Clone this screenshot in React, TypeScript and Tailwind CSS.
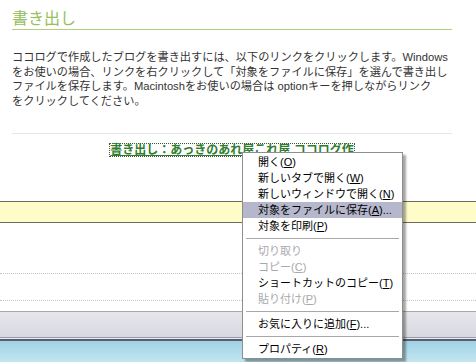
import React from 'react';

type MenuEntry =
  | { sep: true }
  | { sep?: false; label: string; key: string; tail?: string; disabled?: boolean; active?: boolean };

const menu: MenuEntry[] = [
  { label: '開く', key: 'O' },
  { label: '新しいタブで開く', key: 'W' },
  { label: '新しいウィンドウで開く', key: 'N' },
  { label: '対象をファイルに保存', key: 'A', tail: '...', active: true },
  { label: '対象を印刷', key: 'P' },
  { sep: true },
  { label: '切り取り', key: '', disabled: true },
  { label: 'コピー', key: 'C', disabled: true },
  { label: 'ショートカットのコピー', key: 'T' },
  { label: '貼り付け', key: 'P', disabled: true },
  { sep: true },
  { label: 'お気に入りに追加', key: 'F', tail: '...' },
  { sep: true },
  { label: 'プロパティ', key: 'R' },
];

const jp = "font-['Liberation_Sans','Noto_Sans_CJK_JP',sans-serif]";

function ContextMenu() {
  return (
    <div className={`absolute left-[242px] top-[152px] w-[161px] border border-[#8e8e8e] bg-white py-px shadow-[3px_3px_2px_rgba(0,0,0,0.35)] ${jp} text-[11px]`}>
      {menu.map((m, i) =>
        m.sep ? (
          <div key={i} className="my-[4px] mx-[3px] h-px bg-[#a8a8a8]" />
        ) : (
          <div
            key={i}
            className={`flex h-[16px] items-center pl-[15px] leading-none whitespace-nowrap ${
              m.active ? 'bg-[#b6b7cc]' : ''
            } ${m.disabled ? 'text-[#a9a8ac]' : 'text-black'}`}
          >
            {m.label}
            {m.key && (
              <>
                (<span className="underline">{m.key}</span>)
              </>
            )}
            {m.tail}
          </div>
        )
      )}
    </div>
  );
}

export default function App() {
  return (
    <div className={`relative flex h-[362px] w-[476px] flex-col overflow-hidden bg-white ${jp}`}>
      {/* Article */}
      <div className="pl-[12px] pr-[24px]">
        <h2 className="mt-[10px] h-[20px] border-b border-[#b3ce80] text-[16px] leading-[18px] font-normal text-[#95c05a]">
          書き出し
        </h2>

        <p className="mt-[20px] text-[11.2px] leading-[14.5px] text-[#333] whitespace-nowrap">
          ココログで作成したブログを書き出すには、以下のリンクをクリックします。Windows
          <br />
          をお使いの場合、リンクを右クリックして「対象をファイルに保存」を選んで書き出し
          <br />
          ファイルを保存します。Macintoshをお使いの場合は optionキーを押しながらリンク
          <br />
          をクリックしてください。
        </p>

        <div className="mt-[25px] h-px bg-[#e6e6e6]" />

        <div className="mt-[9px] flex justify-center">
          <a className="border border-dotted border-[#3a5a3a] text-[12px] leading-[12px] font-bold text-[#2f7d2f] underline whitespace-nowrap">
            書き出し：あっきのあれ屋これ屋 ココログ作
          </a>
        </div>
      </div>

      {/* Yellow band */}
      <div className="mt-[44px] h-[22px] border-y border-[#6c6c5c] bg-[#fefdc9]" />

      <div className="mt-[50px] border-t border-dotted border-[#c4c4c4]" />
      <div className="mt-[26px] border-t border-dotted border-[#c4c4c4]" />

      {/* Window chrome at the bottom */}
      <div className="mt-[10px] h-px bg-[#a9a9ad]" />
      <div className="h-[25px] bg-gradient-to-b from-[#e6e6ec] to-[#d8d8e0]" />
      <div className="h-px bg-[#9c9ca6]" />
      <div className="h-px bg-[#e8e8ee]" />
      <div className="h-[2px] bg-[#5c5c70]" />
      <div className="flex-1 bg-gradient-to-b from-[#9fd2e6] to-[#c3e6f0]" />

      <ContextMenu />
    </div>
  );
}
